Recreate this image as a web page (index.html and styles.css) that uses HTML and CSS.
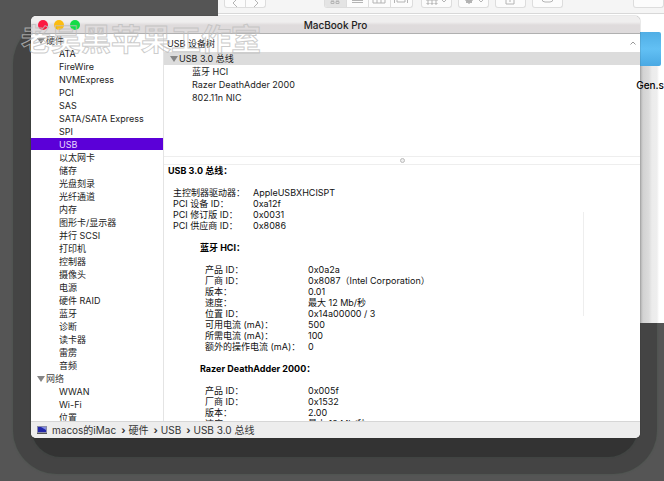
FILE: index.html
```html
<!DOCTYPE html>
<html lang="zh-CN">
<head>
<meta charset="utf-8">
<title>MacBook Pro</title>
<link rel="stylesheet" href="styles.css">
</head>
<body>
<div class="desktop">
  <div class="shade shade-outer"></div>
  <div class="shade shade-inner"></div>

  <section class="finder" aria-label="Finder">
    <div class="finder-bar">
      <div class="group nav">
        <button type="button" aria-label="后退"><svg viewBox="0 0 20 12"><path d="M12 -1L8 3L12 7"/></svg></button>
        <button type="button" aria-label="前进"><svg viewBox="0 0 20 12"><path d="M8 -1L12 3L8 7"/></svg></button>
      </div>
      <div class="group views">
        <button type="button" class="on" aria-label="图标"><svg viewBox="0 0 20 12"><path d="M6 -2h3v2h-3zM11 -2h3v2h-3zM6 1.5h3v2h-3zM11 1.5h3v2h-3z"/></svg></button>
        <button type="button" aria-label="列表"><svg viewBox="0 0 20 12"><path d="M5 0.5h11M5 2.5h11"/></svg></button>
        <button type="button" aria-label="分栏"><svg viewBox="0 0 20 12"><path d="M4 -2h12v5h-12zM8 -2v5M12 -2v5"/></svg></button>
        <button type="button" aria-label="封面"><svg viewBox="0 0 20 12"><path d="M3.5 -1v4M16.5 -1v4M6 -2h8v4h-8z"/></svg></button>
      </div>
      <div class="group wide"><button type="button" aria-label="排列"><svg viewBox="0 0 28 12"><path d="M5 -1h2v2h-2zM9 -1h2v2h-2zM13 -1h2v2h-2zM5 3h2v1h-2zM9 3h2v1h-2zM13 3h2v1h-2zM20 0l2 2l2-2"/></svg></button></div>
      <div class="group wide"><button type="button" aria-label="操作"><svg viewBox="0 0 28 12"><circle class="fill" cx="10" cy="0" r="3"/><path d="M10 -4v8M6 0h8M7 -3l6 6M13 -3l-6 6M20 0l2 2l2-2"/></svg></button></div>
      <div class="group wide"><button type="button" aria-label="共享"><svg viewBox="0 0 28 12"><path d="M10 -1v5h8v-5M14 -4v6"/></svg></button></div>
      <div class="group wide"><button type="button" aria-label="标签"><svg viewBox="0 0 28 12"><rect x="9" y="-6" width="11" height="8" rx="3"/></svg></button></div>
      <div class="group search"></div>
    </div>
    <div class="finder-file"><span class="folder"></span><span class="filename">Gen.sh</span></div>
    <div class="cast"></div>
  </section>

  <main class="window">
    <header class="titlebar">
      <div class="lights">
        <button type="button" class="red" aria-label="关闭"></button>
        <button type="button" class="yellow" aria-label="最小化"></button>
        <button type="button" class="green" aria-label="缩放"></button>
      </div>
      <h1>MacBook Pro</h1>
    </header>

    <div class="body">
      <nav class="sidebar">
        <h2><i class="tri"></i>硬件</h2>
        <ul>
          <li>ATA</li><li>FireWire</li><li>NVMExpress</li><li>PCI</li><li>SAS</li>
          <li>SATA/SATA Express</li><li>SPI</li><li class="active">USB</li><li>以太网卡</li>
          <li>储存</li><li>光盘刻录</li><li>光纤通道</li><li>内存</li><li>图形卡/显示器</li>
          <li>并行 SCSI</li><li>打印机</li><li>控制器</li><li>摄像头</li><li>电源</li>
          <li>硬件 RAID</li><li>蓝牙</li><li>诊断</li><li>读卡器</li><li>雷雳</li><li>音频</li>
        </ul>
        <h2><i class="tri"></i>网络</h2>
        <ul><li>WWAN</li><li>Wi-Fi</li><li>位置</li></ul>
      </nav>

      <div class="content">
        <section class="tree">
          <div class="tree-head"><span>USB 设备树</span><svg viewBox="0 0 6 4"><path d="M0.5 3.5L3 1L5.5 3.5"/></svg></div>
          <div class="tree-root"><i class="tri"></i>USB 3.0 总线</div>
          <ul><li>蓝牙 HCI</li><li>Razer DeathAdder 2000</li><li>802.11n NIC</li></ul>
        </section>
        <div class="splitter"><i></i></div>
        <section class="detail">
          <h3>USB 3.0 总线：</h3>
          <dl>
            <dt>主控制器驱动器：</dt><dd>AppleUSBXHCISPT</dd>
            <dt>PCI 设备 ID：</dt><dd>0xa12f</dd>
            <dt>PCI 修订版 ID：</dt><dd>0x0031</dd>
            <dt>PCI 供应商 ID：</dt><dd>0x8086</dd>
          </dl>
          <div class="device">
            <h3>蓝牙 HCI：</h3>
            <dl>
              <dt>产品 ID：</dt><dd>0x0a2a</dd>
              <dt>厂商 ID：</dt><dd>0x8087（Intel Corporation）</dd>
              <dt>版本：</dt><dd>0.01</dd>
              <dt>速度：</dt><dd>最大 12 Mb/秒</dd>
              <dt>位置 ID：</dt><dd>0x14a00000 / 3</dd>
              <dt>可用电流 (mA)：</dt><dd>500</dd>
              <dt>所需电流 (mA)：</dt><dd>100</dd>
              <dt>额外的操作电流 (mA)：</dt><dd>0</dd>
            </dl>
            <h3>Razer DeathAdder 2000：</h3>
            <dl>
              <dt>产品 ID：</dt><dd>0x005f</dd>
              <dt>厂商 ID：</dt><dd>0x1532</dd>
              <dt>版本：</dt><dd>2.00</dd>
              <dt>速度：</dt><dd>最大 12 Mb/秒</dd>
            </dl>
          </div>
          <i class="rule"></i>
        </section>
      </div>
    </div>

    <footer class="path">
      <svg class="mac" viewBox="0 0 10 8"><rect width="10" height="7" fill="#8a8ca8"/><rect x="1" y="1" width="8" height="5" fill="#2226a8"/><path d="M4 1h5v3z" fill="#7f8ae0"/><rect y="7" width="10" height="1" fill="#555"/></svg>
      <span>macos的iMac</span><b>›</b><span>硬件</span><b>›</b><span>USB</span><b>›</b><span>USB 3.0 总线</span>
    </footer>
  </main>

  <div class="watermark">老吴黑苹果工作室</div>
</div>
</body>
</html>
```
FILE: styles.css
```css
* { box-sizing: border-box; }

body {
  margin: 0;
  font-family: Inter, "Noto Sans CJK SC", sans-serif;
  font-size: 9px;
  color: #222;
}

h1, h2, h3, ul, dl, dd {
  margin: 0;
  padding: 0;
  font-size: inherit;
  font-weight: 400;
  list-style: none;
}

button {
  padding: 0;
  border: 0;
  background: none;
}

.desktop {
  position: relative;
  display: flex;
  height: 100vh;
  padding: 16px 24px 43px 31px;
  overflow: hidden;
  background: #555;
}

.shade { position: absolute; }

.shade-outer {
  inset: 20px 7px 7px 13px;
  border-radius: 44px;
  background: #444;
  box-shadow: 0 0 2px #46544a;
}

.shade-inner {
  inset: 60px 26px 24px 31px;
  border-radius: 30px;
  background: #333;
  box-shadow: 0 0 2px #38453f;
}

/* Window behind */
.finder {
  position: absolute;
  inset: 0 0 158px 218px;
  overflow: hidden;
  background: #fff;
}

.finder-bar {
  display: flex;
  height: 14px;
  padding-left: 6px;
  background: #f5f5f5;
  border-bottom: 1px solid #d8d8d8;
}

.group {
  display: flex;
  height: 8px;
  overflow: hidden;
  background: #fcfcfc;
  border: 1px solid #ddd;
  border-top: 0;
  border-radius: 0 0 3px 3px;
}

.group button {
  flex: 1;
  height: 8px;
  overflow: hidden;
}

.group button + button { border-left: 1px solid #ddd; }
.group .on { background: #e4e4e4; }
.group svg { display: block; width: 20px; height: 12px; fill: none; stroke: #b4b4b4; }
.group .fill { fill: #aaa; }
.nav { width: 42px; margin-right: 58px; }
.views { width: 89px; margin-right: 8px; }
.wide { width: 31px; margin-right: 6px; }
.wide svg { width: 28px; }
.search { flex: 1; margin-left: 64px; }

.finder-file {
  display: flex;
  flex-direction: column;
  align-items: flex-end;
  padding-top: 18px;
}

.folder {
  width: 36px;
  height: 34px;
  margin-right: 3px;
  border-radius: 2px;
  background: linear-gradient(#50aee5, #62c0f4 50%, #4aa9e3);
}

.filename {
  position: relative;
  z-index: 1;
  margin: 12px -6px 0 0;
  font-size: 10px;
  font-weight: 500;
  line-height: 14px;
  color: #000;
}

.cast {
  position: absolute;
  inset: 66px 5px 0 auto;
  width: 20px;
  background: linear-gradient(90deg, #b8b8b8 2px, #d2d2d2 4px, #dcdcdc 10px, #ececec 13px, #eee 18px, #fff);
}

/* Main window */
.window {
  position: relative;
  display: flex;
  flex: 1;
  flex-direction: column;
  min-width: 0;
  overflow: hidden;
  border-radius: 5px;
  background: #fff;
  box-shadow: 0 0 1px #222;
}

.titlebar {
  display: grid;
  grid-template-columns: 1fr auto 1fr;
  align-items: center;
  height: 18px;
  flex: none;
  background: linear-gradient(#efeeee 6px, #dfdbdc 9px, #dedbdc);
  border-bottom: 1px solid #b0b0b0;
}

.titlebar h1 { font-size: 10px; font-weight: 500; line-height: 16px; }

.lights {
  display: flex;
  gap: 6px;
  padding-left: 7px;
}

.lights button {
  width: 10px;
  height: 10px;
  border-radius: 50%;
}

.red { background: #fc1842; }
.yellow { background: #fcbc10; }
.green { background: #13dc47; }

.body {
  display: flex;
  flex: 1;
  min-height: 0;
}

.sidebar {
  flex: none;
  width: 133px;
  overflow: hidden;
  line-height: 13px;
  border-right: 1px solid #e4e4e4;
}

.sidebar h2 {
  display: flex;
  align-items: center;
  gap: 1px;
  height: 13px;
  padding-left: 6px;
  color: #444;
}

.sidebar li { height: 13px; padding-left: 28px; }
.sidebar .active { height: 12px; margin-bottom: 1px; background: #5b00d8; color: #e9d9ff; }

.tri {
  border: solid transparent;
  border-width: 6px 4px 0;
  border-top-color: #858585;
}

.content {
  display: flex;
  flex: 1;
  flex-direction: column;
  min-width: 0;
}

.tree { height: 122px; flex: none; line-height: 13px; }

.tree-head {
  display: flex;
  align-items: center;
  justify-content: space-between;
  height: 18px;
  padding: 0 4px 0 3px;
}

.tree-head svg { width: 6px; height: 4px; fill: none; stroke: #999; }

.tree-root {
  display: flex;
  align-items: center;
  gap: 1px;
  height: 13px;
  padding-left: 6px;
  background: #dcdcdc;
}

.tree li { height: 13px; padding-left: 28px; }

.splitter {
  display: flex;
  align-items: center;
  flex: none;
  height: 9px;
  padding-left: 236px;
  border: solid #eee;
  border-width: 1px 0;
}

.splitter i {
  width: 5px;
  height: 5px;
  border: 1px solid #bbb;
  border-radius: 50%;
  background: #eee;
}

.detail {
  position: relative;
  flex: 1;
  min-height: 0;
  overflow: hidden;
  padding-left: 4px;
  line-height: 11px;
  color: #111;
}

.detail h3 { height: 11px; font-weight: 700; color: #000; }

.detail dl {
  display: grid;
  grid-template-columns: 80px 1fr;
  grid-auto-rows: 11px;
  padding: 11px 0 11px 5px;
  white-space: nowrap;
}

.device { padding-left: 32px; }
.device dl { grid-template-columns: 103px 1fr; }

.rule {
  position: absolute;
  top: 47px;
  right: 56px;
  width: 1px;
  height: 104px;
  background: #eee;
}

.path {
  display: flex;
  align-items: center;
  flex: none;
  height: 17px;
  padding-left: 6px;
  font-size: 10px;
  line-height: 16px;
  color: #333;
  background: #ededed;
  border-top: 1px solid #d6d6d6;
}

.path b { margin: 0 3px 0 5px; line-height: 14px; }
.mac { width: 10px; height: 8px; margin-right: 5px; }

.watermark {
  position: absolute;
  top: 19px;
  left: 21px;
  font-family: "Noto Sans CJK SC", sans-serif;
  font-size: 30px;
  font-weight: 700;
  line-height: 36px;
  white-space: nowrap;
  color: transparent;
  -webkit-text-stroke: 1px rgba(190, 190, 190, 0.8);
  pointer-events: none;
}
```
